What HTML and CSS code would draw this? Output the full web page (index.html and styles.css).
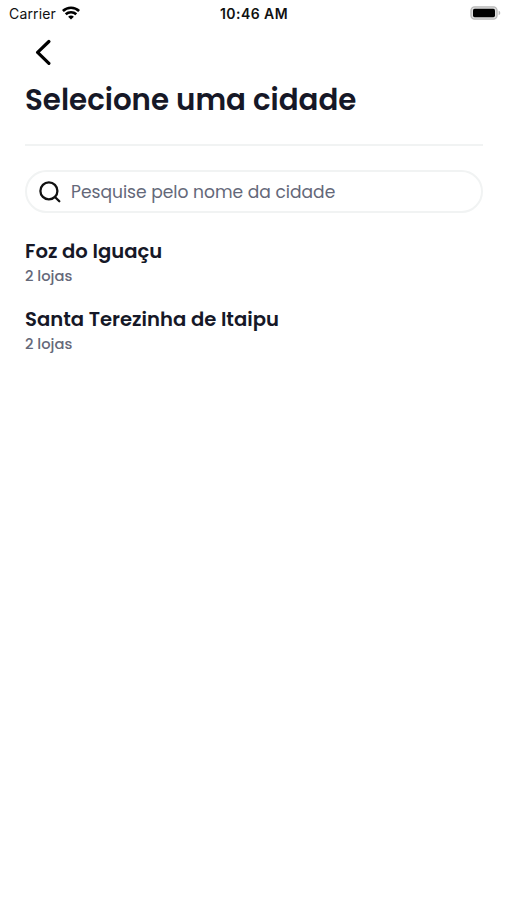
FILE: index.html
```html
<!DOCTYPE html>
<html lang="pt-BR">
<head>
  <meta charset="UTF-8" />
  <meta name="viewport" content="width=device-width, initial-scale=1.0" />
  <title>Selecione uma cidade</title>
  <link rel="stylesheet" href="styles.css">
</head>
<body>
  <div class="status-bar">
    <div class="carrier">
      <span>Carrier</span>
      <svg class="wifi" viewBox="0 0 18 14" fill="none" stroke="#000" stroke-width="2.6">
        <path d="M0.9 5C5.4 0.6 12.6 0.6 17.1 5" />
        <path d="M3.7 8.3C6.7 5.5 11.3 5.5 14.3 8.3" />
        <path d="M9 13.6L6.1 10.7C7.7 9.2 10.3 9.2 11.9 10.7Z" fill="#000" stroke="none" />
      </svg>
    </div>
    <span class="clock">10:46 AM</span>
    <svg class="battery" viewBox="0 0 31 14">
      <rect x="1" y="0.9" width="26" height="12.2" rx="3.6" fill="#ddd" stroke="#b8b8b8" stroke-width="1.4" />
      <rect x="3" y="2.8" width="22" height="8.4" rx="1.6" fill="#000" />
      <path d="M28.6 4.8C30.8 5.4 30.8 8.6 28.6 9.2Z" fill="#b8b8b8" />
    </svg>
  </div>

  <main class="screen">
    <a href="#" class="back" aria-label="Voltar">
      <svg viewBox="0 0 18 26" fill="none" stroke="#000" stroke-width="3.2" stroke-linecap="round" stroke-linejoin="round">
        <path d="M14.9 2.5L3.6 13.4L14.9 24.3" />
      </svg>
    </a>

    <h1>Selecione uma cidade</h1>

    <label class="search">
      <svg viewBox="0 0 22 22" fill="none" stroke="#111" stroke-width="2.3" stroke-linecap="round">
        <circle cx="9.9" cy="9.9" r="8.5" />
        <path d="M16.2 16.2L20.3 20.3" />
      </svg>
      <input type="text" placeholder="Pesquise pelo nome da cidade">
    </label>

    <ul class="cities">
      <li>
        <h2>Foz do Iguaçu</h2>
        <p>2 lojas</p>
      </li>
      <li>
        <h2>Santa Terezinha de Itaipu</h2>
        <p>2 lojas</p>
      </li>
    </ul>
  </main>
</body>
</html>
```
FILE: styles.css
```css
:root {
  --texto: #161827;
  --cinza: #646879;
  --borda: #f1f3f3;
}

* {
  box-sizing: border-box;
}

body {
  margin: 0;
  background: #fff;
  color: var(--texto);
  font-family: Poppins, Inter, sans-serif;
}

.status-bar {
  display: grid;
  grid-template-columns: 1fr auto 1fr;
  align-items: center;
  height: 27px;
  padding: 0 6px 0 9px;
  color: #111;
  font-family: Inter, sans-serif;
  font-size: 14px;
}

.carrier {
  display: flex;
  align-items: center;
  gap: 6px;
  letter-spacing: 0.15px;
}

.wifi {
  width: 18px;
  height: 14px;
  margin-top: -2px;
}

.clock {
  margin-left: -2px;
  font-weight: 600;
  letter-spacing: 0.45px;
}

.battery {
  width: 31px;
  height: 14px;
  margin-top: -1px;
  justify-self: end;
}

.screen {
  padding: 0 24px 0 25px;
}

.back {
  display: block;
  height: 53px;
  padding: 12px 0 0 9px;
}

.back svg {
  display: block;
  width: 18px;
  height: 26px;
}

h1 {
  margin: 0;
  height: 66px;
  border-bottom: 2px solid var(--borda);
  font-size: 29.3px;
  font-weight: 600;
  line-height: 39px;
}

.search {
  display: flex;
  align-items: center;
  gap: 10px;
  height: 43px;
  margin-top: 24px;
  padding: 0 12px;
  border: 2px solid var(--borda);
  border-radius: 22px;
}

.search svg {
  flex: none;
  width: 22px;
  height: 22px;
}

.search input {
  flex: 1;
  min-width: 0;
  padding: 0;
  border: none;
  outline: none;
  background: none;
  color: var(--texto);
  font: inherit;
  font-size: 17.1px;
}

.search input::placeholder {
  color: var(--cinza);
  opacity: 1;
}

.cities {
  margin: 26px 0 0;
  padding: 0;
  list-style: none;
}

.cities li {
  height: 68px;
}

.cities h2 {
  margin: 0;
  font-size: 19.6px;
  font-weight: 600;
  line-height: 24px;
}

.cities p {
  margin: 0;
  color: var(--cinza);
  font-size: 14.7px;
  font-weight: 500;
  line-height: 26px;
}
```
